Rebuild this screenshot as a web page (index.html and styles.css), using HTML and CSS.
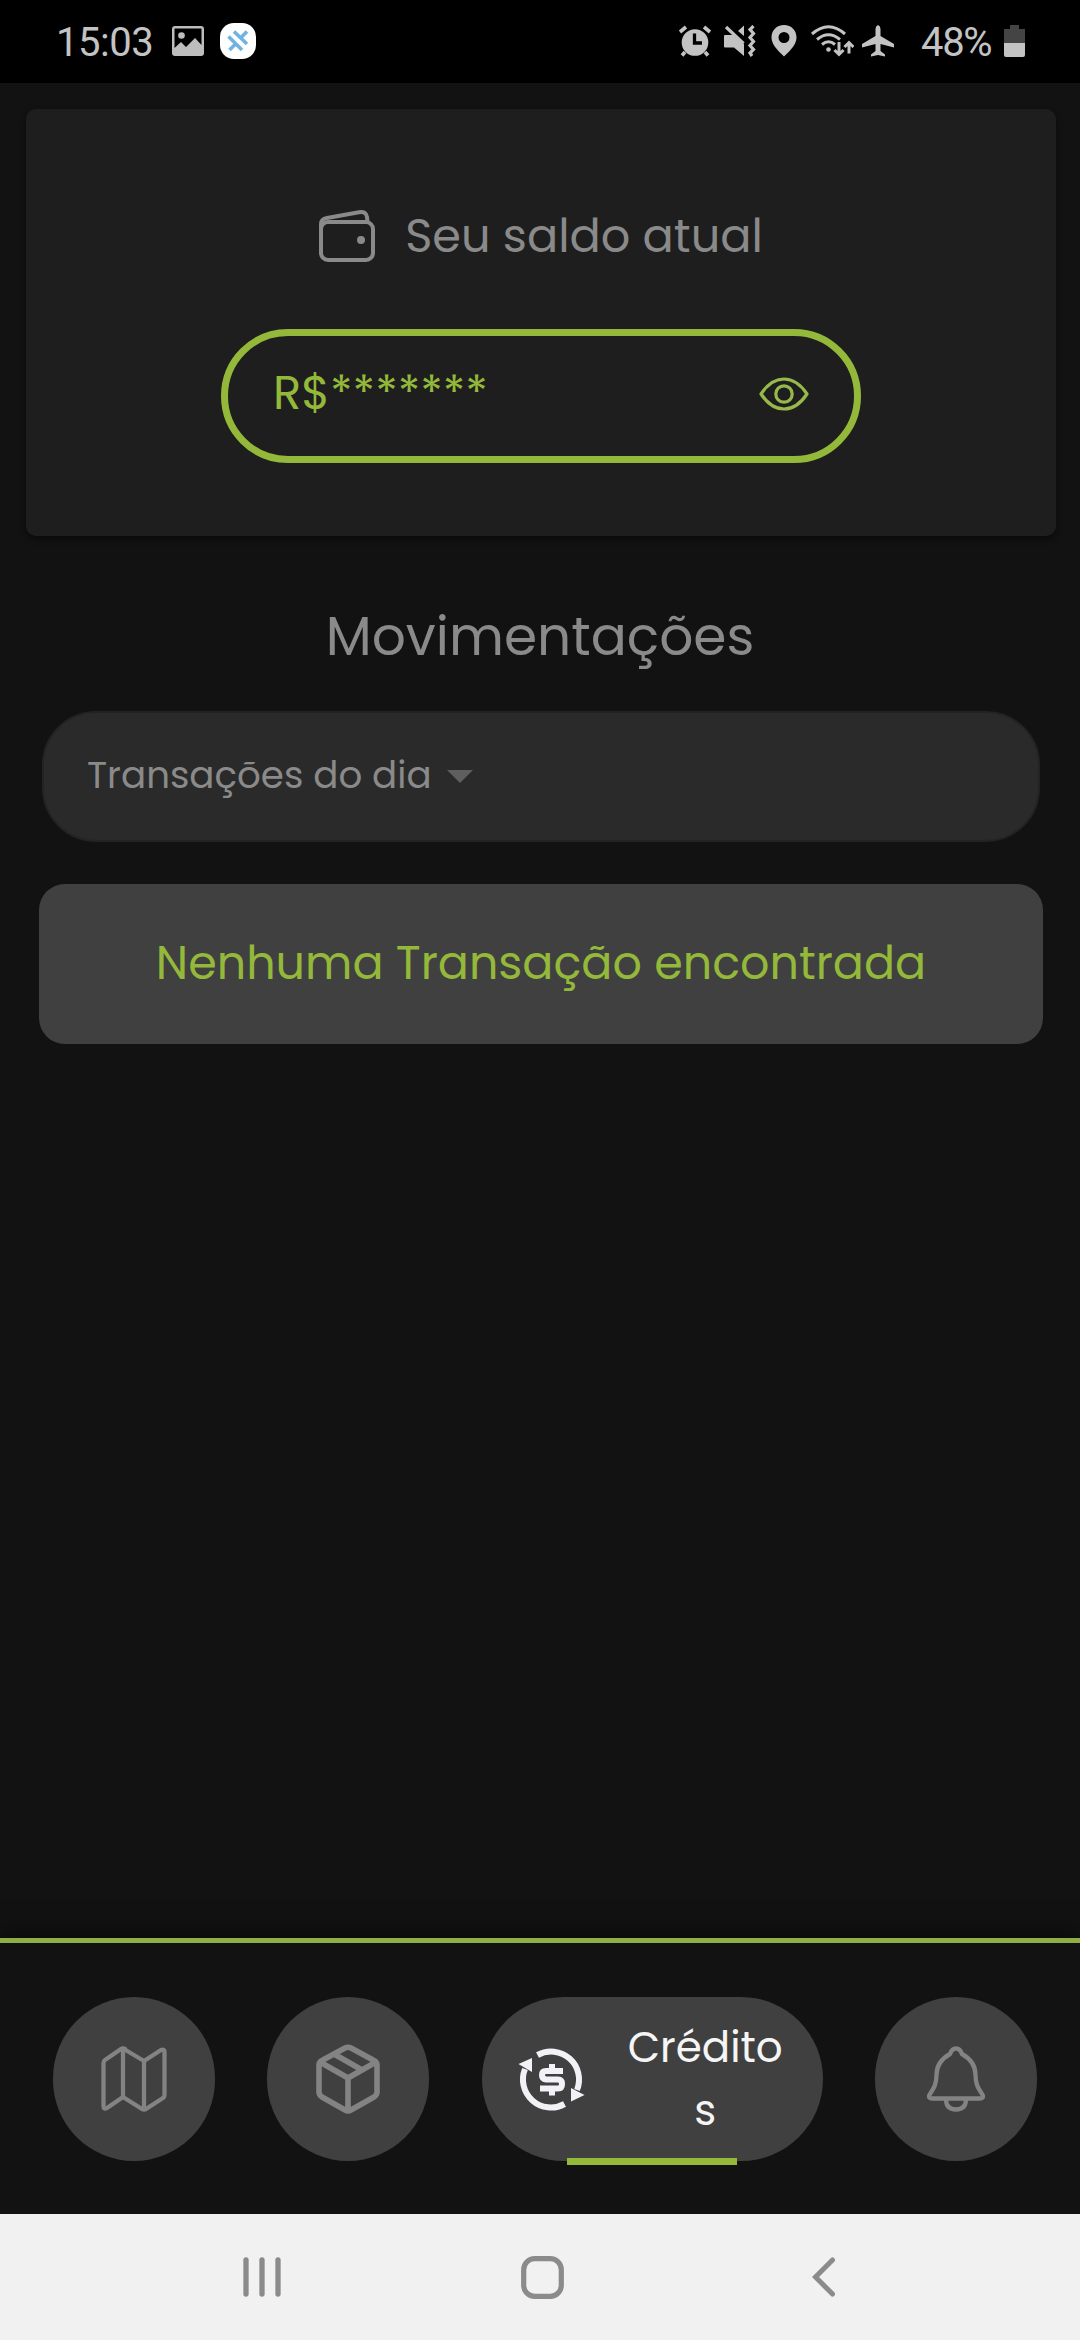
FILE: index.html
```html
<!DOCTYPE html>
<html lang="pt-BR">
<head>
<meta charset="utf-8">
<title>Créditos</title>
<link rel="stylesheet" href="styles.css">
</head>
<body>
<div class="screen">
  <header class="status">
    <span class="clock">15:03</span>
    <svg class="i-photo" width="32" height="30" viewBox="0 0 32 30"><path fill="#bdbdbd" fill-rule="evenodd" d="M3 0H29Q32 0 32 3V27Q32 30 29 30H3Q0 30 0 27V3Q0 0 3 0ZM2.500 2.500V22L9 16 14 21 23 12 29.500 19V2.500Z"/><circle cx="9.500" cy="9.500" r="3.300" fill="#bdbdbd"/></svg>
    <svg class="i-app" width="36" height="36" viewBox="0 0 36 36"><rect width="36" height="36" rx="14" fill="#fff"/><g stroke="#6fb3e2" stroke-width="3.600" fill="none"><path d="M8.500 13.500 22 27M14 8.500 27 21M9.500 27 16 20.500M20 15.500 27 8.500"/></g></svg>
    <div class="status-right">
      <svg class="i-alarm" width="34" height="32" viewBox="0 0 34 32"><circle cx="17" cy="17.500" r="13.300" fill="#c3c3c3"/><path d="M2 7 8 2M26 2 32 7M7 27 4 30.500M27 27 30 30.500" stroke="#c3c3c3" stroke-width="3.600"/><path d="M16.500 8.500V18H24" stroke="#000" stroke-width="3.300" fill="none"/></svg>
      <svg class="i-mute" width="32" height="32" viewBox="0 0 32 32"><path fill="#c3c3c3" d="M0 11Q0 10 1 10H9L20 19V31L10 22.500H1Q0 22.500 0 21.500ZM14 6 20 .5V11Z"/><path d="M2 2 19.500 18.500" stroke="#c3c3c3" stroke-width="3.200"/><path d="M29.500 1 26 4.500 29.500 8.500 26 12.500 29.500 16.500 26 20.500 29.500 24.500 26 28 28 31" stroke="#c3c3c3" stroke-width="3.200" fill="none"/></svg>
      <svg class="i-pin" width="26" height="32" viewBox="0 0 26 32"><path fill="#c3c3c3" fill-rule="evenodd" d="M13 0C5.500 0 .5 5.500.5 12.500.5 19 6 25 13 31.500 20 25 25.500 19 25.500 12.500 25.500 5.500 20.500 0 13 0ZM13 7A5.500 5.500 0 1 1 13 18 5.500 5.500 0 0 1 13 7Z"/></svg>
      <svg class="i-wifi" width="43" height="32" viewBox="0 0 43 32"><g fill="none" stroke="#c3c3c3" stroke-width="3"><path d="M1 9Q17.500-5.500 34 9M6 14.500Q17.500 5 29 14.500M11 19.500Q17.500 14 24 19.500"/><path d="M28 17V29M23.500 25 28 29.500 32.500 25M38 28.500V18M33.500 22 38 17.500 42.500 22"/></g><circle cx="17.500" cy="24.500" r="2.300" fill="#c3c3c3"/></svg>
      <svg class="i-plane" width="34" height="32" viewBox="0 0 34 32"><path fill="#c3c3c3" d="M17 0Q19.500 1 19.500 4V11L33 19V22.500L19.500 19V26L24 29.500V31.500L17 30 10 31.500V29.500L14.500 26V19L1 22.500V19L14.500 11V4Q14.500 1 17 0Z"/></svg>
      <span class="percent">48%</span>
      <svg class="i-battery" width="21" height="32" viewBox="0 0 21 32"><path fill="#444" d="M6 0H15V4H21V18H0V4H6Z"/><path fill="#c3c3c3" d="M0 18H21V30Q21 32 19 32H2Q0 32 0 30Z"/></svg>
    </div>
  </header>

  <main class="content">
    <section class="balance">
      <div class="balance-title">
        <svg width="56" height="52" viewBox="0 0 56 52" fill="none" stroke="#8a8a8a" stroke-width="4"><rect x="2" y="12" width="52" height="38" rx="7"/><path d="M2 19V14Q2 9 8 8L40 2.200Q47 1 48 7L48.500 12"/><circle cx="42" cy="30" r="4" fill="#8a8a8a" stroke="none"/></svg>
        <span class="t t-balance">Seu saldo atual</span>
      </div>
      <div class="amount">
        <span class="t t-amount">R$*******</span>
        <svg class="eye" width="50" height="34" viewBox="0 0 50 34" fill="none" stroke="#97b94a" stroke-width="3.200"><path stroke-linejoin="round" d="M2 17C8 8 15 2 25 2S42 8 48 17C42 26 35 32 25 32S8 26 2 17Z"/><circle cx="25" cy="17" r="8.200"/></svg>
      </div>
    </section>
    <h1 class="t t-heading">Movimentações</h1>
    <div class="select"><span class="t t-select">Transações do dia</span><i class="caret"></i></div>
    <div class="empty"><span class="t t-empty">Nenhuma Transação encontrada</span></div>
  </main>

  <nav class="tabs">
    <a class="tab"><svg width="66" height="66" viewBox="0 0 66 66" fill="none" stroke="#838383" stroke-width="4.300" stroke-linejoin="round"><path d="M22 2.500 43 15 60 4Q63.500 2.500 63.500 6V49Q63.500 51 62 52L45 63Q43 64 41 63L22 51 6 62Q2.500 64 2.500 60V17Q2.500 15 4 14L20 3Q22 2 24 3ZM22 3V51M43 15V63"/></svg></a>
    <a class="tab"><svg width="64" height="70" viewBox="0 0 64 70" fill="none" stroke="#838383" stroke-width="5.600" stroke-linejoin="round"><path d="M29 4Q32 2.500 35 4L58 16.500Q61 18 61 21V48Q61 51 58 53L35 66Q32 68 29 66L6 53Q3 51 3 48V21Q3 18 6 16.500ZM4 18 32 34 60 18M32 34V67M18 10 46 26"/></svg></a>
    <a class="tab tab-active">
      <svg class="coin" width="67" height="65" viewBox="0 0 67 65" fill="none" stroke="#f2f2f6" stroke-width="6"><path d="M19.500 8A28 28 0 0 1 59 43M46.500 57A28 28 0 0 1 7 22"/><path fill="#f2f2f6" stroke="none" d="M.5 17 14 11V25ZM66.500 48 53 54.500V41Z"/><path d="M45 24H28Q24 24 24 28T28 32.500H40Q44 32.500 44 37T40 41.500H22M34 17V24M34 41.500V48.500"/></svg>
      <span class="t t-tab">Crédito<br>s</span>
      <i class="mark"></i>
    </a>
    <a class="tab"><svg width="58" height="66" viewBox="0 0 58 66" fill="none" stroke="#838383" stroke-width="4.300" stroke-linejoin="round"><path d="M29 2.500C25 2.500 24 5 23 8 14 13 9.500 19 9.500 29 9.500 38 7 42 3 48 1 51 2 52.500 5 52.500H53C56 52.500 57 51 55 48 51 42 48.500 38 48.500 29 48.500 19 44 13 35 8 34 5 33 2.500 29 2.500ZM19 53Q19 63.500 29 63.500T39 53"/></svg></a>
  </nav>

  <footer class="system">
    <svg class="recents" width="38" height="40" viewBox="0 0 38 40" stroke="#8b8b8b" stroke-width="5.300" stroke-linecap="round"><path d="M3 3V37M19 3V37M35 3V37"/></svg>
    <svg class="home" width="43" height="43" viewBox="0 0 43 43"><rect x="2.700" y="2.700" width="37.600" height="37.600" rx="11" fill="none" stroke="#8b8b8b" stroke-width="5.200"/></svg>
    <svg class="back" width="24" height="40" viewBox="0 0 24 40" fill="none" stroke="#8b8b8b" stroke-width="5" stroke-linecap="round"><path d="M20.500 3 3.500 20 20.500 37"/></svg>
  </footer>
</div>
</body>
</html>
```
FILE: styles.css
```css
* { box-sizing: border-box; }
body { margin: 0; background: #121212; }
svg { display: block; flex: none; }
.screen { width: 1080px; height: 2340px; display: flex; flex-direction: column; overflow: hidden; }

.status { height: 83px; flex: none; background: #000; display: flex; align-items: center; padding: 0 55px 2px 56px; color: #c3c3c3; font: 40px/48px Roboto, sans-serif; }
.clock { width: 116px; padding-top: 4px; letter-spacing: -0.5px; }
.i-app { margin-left: 16px; }
.status-right { margin-left: auto; display: flex; align-items: center; }
.i-mute { margin-left: 12px; }
.i-pin { margin-left: 15px; }
.i-wifi { margin-left: 14px; }
.i-plane { margin-left: 7px; }
.percent { margin-left: 26px; width: 83px; padding-top: 4px; letter-spacing: -1.3px; white-space: nowrap; }

.t { font-family: Poppins, Inter, "Noto Sans", sans-serif; font-weight: 400; white-space: nowrap; color: #8a8a8a; }

.content { flex: 1; display: flex; flex-direction: column; padding-top: 26px; }
.balance { height: 427px; margin: 0 24px 0 26px; border-radius: 10px; background: #1e1e1e; box-shadow: 0 3px 6px rgba(0,0,0,.45); display: flex; flex-direction: column; align-items: center; padding-top: 97px; }
.balance-title { display: flex; align-items: center; gap: 30px; height: 60px; }
.t-balance { font-size: 46.2px; line-height: 60px; }
.amount { margin-top: 63px; width: 640px; height: 134px; border: 7px solid #93b83a; border-radius: 67px; display: flex; align-items: center; padding: 0 45px 4px; }
.t-amount { color: #93b83a; font-size: 46.4px; padding-bottom: 2px; }
.eye { margin-left: auto; }
.t-heading { margin: 63px 0 0; text-align: center; font-size: 53.4px; line-height: 76px; }
.select { margin: 36px 40px 0 42px; height: 131px; border: 2px solid #232323; border-radius: 54px; background: #2a2a2a; display: flex; align-items: center; padding: 0 43px; gap: 15px; }
.t-select { font-size: 37.2px; padding-bottom: 3px; }
.caret { border: 13px solid transparent; border-top-color: #5f5f5f; border-bottom: 0; }
.empty { margin: 42px 37px 0 39px; height: 160px; border-radius: 26px; background: #404040; display: flex; align-items: center; justify-content: center; padding-bottom: 2px; }
.t-empty { color: #93b83a; font-size: 46px; }

.tabs { height: 276px; flex: none; border-top: 5px solid #8fae43; box-shadow: 0 -3px 24px rgba(0,0,0,.6); display: flex; padding: 54px 43px 0 53px; justify-content: space-between; }
.tab { width: 162px; height: 164px; border-radius: 82px; background: #404040; display: flex; align-items: center; justify-content: center; }
.tab-active { width: 341px; position: relative; justify-content: flex-start; padding-left: 36px; }
.t-tab { color: #f5f5f5; font-size: 42px; line-height: 63px; text-align: center; margin-left: 43px; }
.mark { position: absolute; left: 85px; bottom: -4px; width: 170px; height: 7px; background: #93b83a; }

.system { height: 126px; flex: none; background: #f1f1f1; display: flex; align-items: center; padding-left: 243px; }
.home { margin-left: 240px; }
.back { margin-left: 248px; }
```
